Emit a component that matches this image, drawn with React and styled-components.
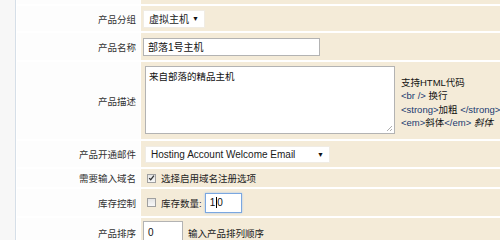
import React from 'react';
import styled, { createGlobalStyle } from 'styled-components';

const GlobalStyle = createGlobalStyle`
  html, body {
    margin: 0;
    padding: 0;
    background: #ffffff;
  }
  body {
    width: 500px;
    height: 240px;
    overflow: hidden;
    font-family: "Liberation Sans", "Noto Sans CJK SC", sans-serif;
    font-size: 9.5px;
    color: #222;
  }
`;

const Page = styled.div`
  display: flex;
  height: 240px;
`;

const SideStrip = styled.div`
  width: 15px;
  flex-shrink: 0;
  background: #f7f7f7;
  border-right: 1px solid #d6dfe8;
`;

const FormTable = styled.div`
  flex: 1;
  margin-left: 1px;
  display: grid;
  grid-template-columns: 123px 1fr;
  grid-auto-rows: auto;
  column-gap: 1px;
  row-gap: 2px;
  align-content: start;
  background: #ffffff;
`;

const LabelCell = styled.div`
  height: ${({ $h }) => $h}px;
  background: #fdfdfd;
  display: flex;
  align-items: center;
  justify-content: flex-end;
  padding-right: 4px;
  color: #333;
  white-space: nowrap;
`;

const FieldCell = styled.div`
  height: ${({ $h }) => $h}px;
  background-color: #f4ebd8;
  background-image: radial-gradient(rgba(255, 255, 255, 0.35) 0.6px, transparent 0.7px);
  background-size: 2px 2px;
  display: flex;
  align-items: ${({ $top }) => ($top ? 'flex-start' : 'center')};
  padding-left: ${({ $pad }) => $pad ?? 2}px;
  padding-top: ${({ $pt }) => $pt ?? 0}px;
  gap: 3px;
  white-space: nowrap;
  box-sizing: border-box;
`;

const SelectBox = styled.div`
  width: ${({ $w }) => $w}px;
  height: ${({ $hh }) => $hh}px;
  box-sizing: border-box;
  background: #ffffff;
  border: 1px solid #f0ece4;
  display: flex;
  align-items: center;
  justify-content: space-between;
  padding: 0 5px;
  color: #1a1a1a;
  font-size: 10px;
`;

const Arrow = styled.span`
  font-size: 7px;
  color: #111;
`;

const TextInput = styled.div`
  width: ${({ $w }) => $w}px;
  height: ${({ $hh }) => $hh ?? 18}px;
  box-sizing: border-box;
  background: #ffffff;
  border: 1px solid ${({ $focus }) => ($focus ? '#7aa7e0' : '#b3b3b3')};
  box-shadow: ${({ $focus }) => ($focus ? '0 0 2px #a9c8f0' : 'none')};
  display: flex;
  align-items: center;
  padding-left: 4px;
  color: #111;
  font-size: 10px;
`;

const Caret = styled.span`
  display: inline-block;
  width: 1px;
  height: 11px;
  background: #000;
  margin: 0 0.5px;
`;

const TextArea = styled.div`
  position: relative;
  width: 250px;
  height: 68px;
  box-sizing: border-box;
  background: #ffffff;
  border: 1px solid #b3b3b3;
  padding: 3px 3px;
  color: #111;
  line-height: 13px;
`;

const Grip = styled.svg`
  position: absolute;
  right: 1px;
  bottom: 1px;
`;

const Help = styled.div`
  margin-left: 3px;
  padding-top: 10px;
  line-height: 13.3px;
  color: #111;
`;

const Tag = styled.span`
  color: #203a70;
`;

const Box = styled.span`
  width: 9px;
  height: 9px;
  box-sizing: border-box;
  border: 1px solid #a0a0a0;
  background: linear-gradient(#e4e4e4, #f8f8f8);
  display: inline-flex;
  align-items: center;
  justify-content: center;
  margin-left: 2px;
  margin-right: 2px;
  flex-shrink: 0;
`;

const Check = ({ checked }) => (
  <Box>
    {checked && (
      <svg width="8" height="8" viewBox="0 0 8 8">
        <path d="M1.3 4.2 L3.1 6 L6.8 1.4" stroke="#333" strokeWidth="1.4" fill="none" />
      </svg>
    )}
  </Box>
);

const Row = ({ label, h, children, ...rest }) => (
  <>
    <LabelCell $h={h}>{label}</LabelCell>
    <FieldCell $h={h} {...rest}>{children}</FieldCell>
  </>
);

export default function App() {
  return (
    <Page>
      <GlobalStyle />
      <SideStrip />
      <FormTable>
        <Row label="" h={4} />
        <Row label="产品分组" h={25}>
          <SelectBox $w={62} $hh={18}>
            <span>虚拟主机</span>
            <Arrow>▼</Arrow>
          </SelectBox>
        </Row>
        <Row label="产品名称" h={27}>
          <TextInput $w={177}>部落1号主机</TextInput>
        </Row>
        <Row label="产品描述" h={77} $top $pad={4} $pt={4}>
          <TextArea>
            来自部落的精品主机
            <Grip width="8" height="8" viewBox="0 0 8 8">
              <path d="M7 2 L2 7 M7 5 L5 7" stroke="#999" strokeWidth="0.8" />
            </Grip>
          </TextArea>
          <Help>
            支持HTML代码
            <br />
            <Tag>&lt;br /&gt;</Tag> 换行
            <br />
            <Tag>&lt;strong&gt;</Tag>加粗 <Tag>&lt;/strong&gt;</Tag> <b>加粗</b>
            <br />
            <Tag>&lt;em&gt;</Tag>斜体<Tag>&lt;/em&gt;</Tag> <i>斜体</i>
          </Help>
        </Row>
        <Row label="产品开通邮件" h={26} $pad={4}>
          <SelectBox $w={185} $hh={17}>
            <span>Hosting Account Welcome Email</span>
            <Arrow>▼</Arrow>
          </SelectBox>
        </Row>
        <Row label="需要输入域名" h={18} $pad={4}>
          <Check checked />
          <span>选择启用域名注册选项</span>
        </Row>
        <Row label="库存控制" h={27} $pad={4}>
          <Check />
          <span>库存数量:</span>
          <TextInput $w={37} $hh={20} $focus>
            1<Caret />0
          </TextInput>
        </Row>
        <Row label="产品排序" h={30} $top $pt={3}>
          <TextInput $w={40} $hh={22}>0</TextInput>
          <span style={{ marginLeft: 2, paddingTop: 5 }}>输入产品排列顺序</span>
        </Row>
      </FormTable>
    </Page>
  );
}
